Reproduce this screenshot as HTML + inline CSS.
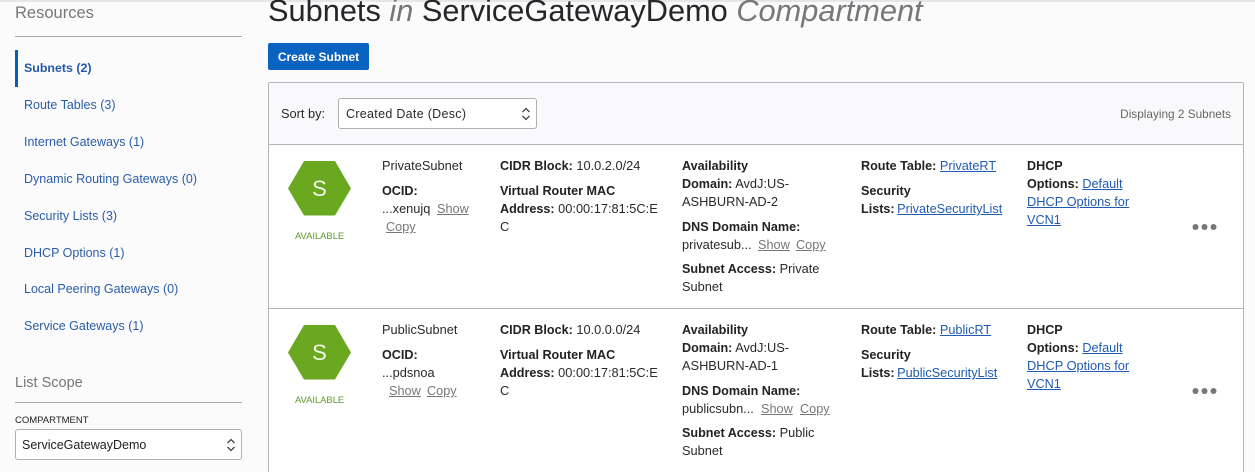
<!DOCTYPE html>
<html>
<head>
<meta charset="utf-8">
<style>
html,body{margin:0;padding:0;overflow:hidden;height:472px}
body{width:1255px;position:relative;background:#fbfbfc;font-family:"Liberation Sans",sans-serif;color:#1c1c1c}
.t{position:absolute;white-space:nowrap;font-size:12.8px;line-height:18px;color:#2a2a2a}
.n{position:absolute;white-space:nowrap;font-size:12.5px;line-height:18px;color:#2a5da8;left:24px}
b{font-weight:bold;color:#222;font-size:12.6px}
a{color:#1f5bb0;text-decoration:underline;font-size:12.7px}
a.g{color:#777}
.sel{position:absolute;background:#fff;border:1px solid #b0b0b4;border-radius:3px;box-sizing:border-box}
.hdg{position:absolute;font-size:16.5px;line-height:20px;color:#77777b;white-space:nowrap}
</style>
</head>
<body>
<div style="position:absolute;left:0;top:0;width:1255px;height:2px;background:#e6e6e8"></div>

<div class="hdg" style="left:15px;top:3px">Resources</div>
<div style="position:absolute;left:15px;top:36px;width:227px;height:1px;background:#a9a9ad"></div>
<div style="position:absolute;left:15px;top:50px;width:3px;height:37px;background:#0b5fb5"></div>
<div class="n" style="top:59px;font-weight:bold;color:#2459a9;font-size:12.4px">Subnets (2)</div>
<div class="n" style="top:96px">Route Tables (3)</div>
<div class="n" style="top:133px">Internet Gateways (1)</div>
<div class="n" style="top:170px">Dynamic Routing Gateways (0)</div>
<div class="n" style="top:207px">Security Lists (3)</div>
<div class="n" style="top:244px">DHCP Options (1)</div>
<div class="n" style="top:280px">Local Peering Gateways (0)</div>
<div class="n" style="top:317px">Service Gateways (1)</div>

<div class="hdg" style="left:15px;top:373px;font-size:14.5px">List Scope</div>
<div style="position:absolute;left:15px;top:402px;width:227px;height:1px;background:#a9a9ad"></div>
<div class="t" style="left:15px;top:412px;font-size:9.5px;color:#222">COMPARTMENT</div>
<div class="sel" style="left:15px;top:429px;width:227px;height:31px"></div>
<div class="t" style="left:22px;top:436px;font-size:12.5px;color:#222">ServiceGatewayDemo</div>
<svg style="position:absolute;left:226px;top:438px" width="10" height="14" viewBox="0 0 10 14"><path d="M1.5 5L5 1.5L8.5 5M1.5 9L5 12.5L8.5 9" fill="none" stroke="#444" stroke-width="1.3"/></svg>

<div style="position:absolute;left:268px;top:-9px;font-size:30.75px;line-height:40px;white-space:nowrap;color:#26262a">Subnets <i style="color:#77777b">in</i> ServiceGatewayDemo <i style="color:#77777b">Compartment</i></div>

<div style="position:absolute;left:268px;top:43px;width:101px;height:27px;background:#0a63c0;border-radius:2px;color:#fff;font-size:12px;font-weight:bold;line-height:28px;text-align:center">Create Subnet</div>

<div style="position:absolute;left:268px;top:82px;width:976px;height:400px;background:#fff;border:1px solid #b4b4b8;box-sizing:border-box;border-radius:2px 2px 0 0"></div>
<div style="position:absolute;left:269px;top:83px;width:974px;height:61px;background:#f9f9fb;border-bottom:1px solid #b4b4b8"></div>
<div style="position:absolute;left:269px;top:308px;width:974px;height:1px;background:#b4b4b8"></div>

<div class="t" style="left:281px;top:105px">Sort by:</div>
<div class="sel" style="left:338px;top:98px;width:199px;height:31px"></div>
<div class="t" style="left:346px;top:105px;font-size:12.5px;letter-spacing:.3px">Created Date (Desc)</div>
<svg style="position:absolute;left:521px;top:107px" width="10" height="14" viewBox="0 0 10 14"><path d="M1.5 5L5 1.5L8.5 5M1.5 9L5 12.5L8.5 9" fill="none" stroke="#444" stroke-width="1.3"/></svg>
<div class="t" style="right:24px;top:105px;font-size:11.8px;color:#666">Displaying 2 Subnets</div>

<!-- row 1 -->
<svg style="position:absolute;left:288px;top:161px" width="64" height="55" viewBox="0 0 64 55"><polygon points="0,27.5 16,0 47,0 63,27.5 47,54.5 16,54.5" fill="#6aa91f"/><text x="31.5" y="35" text-anchor="middle" font-family="Liberation Sans" font-size="22" fill="#f2f7e6">S</text></svg>
<div class="t" style="left:295px;top:227px;font-size:9.4px;color:#5e9a2a">AVAILABLE</div>
<div class="t" style="left:382px;top:157px">PrivateSubnet</div>
<div class="t" style="left:382px;top:182px"><b>OCID:</b></div>
<div class="t" style="left:382px;top:200px">...xenujq</div>
<div class="t" style="left:437px;top:200px"><a class="g">Show</a></div>
<div class="t" style="left:386px;top:218px"><a class="g">Copy</a></div>
<div class="t" style="left:500px;top:157px"><b>CIDR Block:</b> 10.0.2.0/24</div>
<div class="t" style="left:500px;top:182px"><b>Virtual Router MAC</b></div>
<div class="t" style="left:500px;top:200px"><b>Address:</b> 00:00:17:81:5C:E</div>
<div class="t" style="left:500px;top:218px">C</div>
<div class="t" style="left:682px;top:157px"><b>Availability</b></div>
<div class="t" style="left:682px;top:175px"><b>Domain:</b> AvdJ:US-</div>
<div class="t" style="left:682px;top:193px">ASHBURN-AD-2</div>
<div class="t" style="left:682px;top:218px"><b>DNS Domain Name:</b></div>
<div class="t" style="left:682px;top:236px">privatesub...</div>
<div class="t" style="left:758px;top:236px"><a class="g">Show</a></div>
<div class="t" style="left:796px;top:236px"><a class="g">Copy</a></div>
<div class="t" style="left:682px;top:260px"><b>Subnet Access:</b> Private</div>
<div class="t" style="left:682px;top:278px">Subnet</div>
<div class="t" style="left:861px;top:157px"><b>Route Table:</b> <a>PrivateRT</a></div>
<div class="t" style="left:861px;top:182px"><b>Security</b></div>
<div class="t" style="left:861px;top:200px"><b>Lists:</b> <a style="margin-left:-1px">PrivateSecurityList</a></div>
<div class="t" style="left:1027px;top:157px"><b>DHCP</b></div>
<div class="t" style="left:1027px;top:175px"><b>Options:</b> <a>Default</a></div>
<div class="t" style="left:1027px;top:193px"><a style="font-size:12.8px">DHCP Options for</a></div>
<div class="t" style="left:1027px;top:211px"><a>VCN1</a></div>
<svg style="position:absolute;left:1192px;top:223px" width="26" height="8"><circle cx="3.5" cy="4" r="3" fill="#77777b"/><circle cx="12.5" cy="4" r="3" fill="#77777b"/><circle cx="21.5" cy="4" r="3" fill="#77777b"/></svg>

<!-- row 2 -->
<svg style="position:absolute;left:288px;top:325px" width="64" height="55" viewBox="0 0 64 55"><polygon points="0,27.5 16,0 47,0 63,27.5 47,54.5 16,54.5" fill="#6aa91f"/><text x="31.5" y="35" text-anchor="middle" font-family="Liberation Sans" font-size="22" fill="#f2f7e6">S</text></svg>
<div class="t" style="left:295px;top:391px;font-size:9.4px;color:#5e9a2a">AVAILABLE</div>
<div class="t" style="left:382px;top:321px">PublicSubnet</div>
<div class="t" style="left:382px;top:346px"><b>OCID:</b></div>
<div class="t" style="left:382px;top:364px">...pdsnoa</div>
<div class="t" style="left:389px;top:382px"><a class="g">Show</a></div>
<div class="t" style="left:427px;top:382px"><a class="g">Copy</a></div>
<div class="t" style="left:500px;top:321px"><b>CIDR Block:</b> 10.0.0.0/24</div>
<div class="t" style="left:500px;top:346px"><b>Virtual Router MAC</b></div>
<div class="t" style="left:500px;top:364px"><b>Address:</b> 00:00:17:81:5C:E</div>
<div class="t" style="left:500px;top:382px">C</div>
<div class="t" style="left:682px;top:321px"><b>Availability</b></div>
<div class="t" style="left:682px;top:339px"><b>Domain:</b> AvdJ:US-</div>
<div class="t" style="left:682px;top:357px">ASHBURN-AD-1</div>
<div class="t" style="left:682px;top:382px"><b>DNS Domain Name:</b></div>
<div class="t" style="left:682px;top:400px">publicsubn...</div>
<div class="t" style="left:761px;top:400px"><a class="g">Show</a></div>
<div class="t" style="left:800px;top:400px"><a class="g">Copy</a></div>
<div class="t" style="left:682px;top:424px"><b>Subnet Access:</b> Public</div>
<div class="t" style="left:682px;top:442px">Subnet</div>
<div class="t" style="left:861px;top:321px"><b>Route Table:</b> <a>PublicRT</a></div>
<div class="t" style="left:861px;top:346px"><b>Security</b></div>
<div class="t" style="left:861px;top:364px"><b>Lists:</b> <a style="margin-left:-1px">PublicSecurityList</a></div>
<div class="t" style="left:1027px;top:321px"><b>DHCP</b></div>
<div class="t" style="left:1027px;top:339px"><b>Options:</b> <a>Default</a></div>
<div class="t" style="left:1027px;top:357px"><a style="font-size:12.8px">DHCP Options for</a></div>
<div class="t" style="left:1027px;top:375px"><a>VCN1</a></div>
<svg style="position:absolute;left:1192px;top:387px" width="26" height="8"><circle cx="3.5" cy="4" r="3" fill="#77777b"/><circle cx="12.5" cy="4" r="3" fill="#77777b"/><circle cx="21.5" cy="4" r="3" fill="#77777b"/></svg>
</body>
</html>
